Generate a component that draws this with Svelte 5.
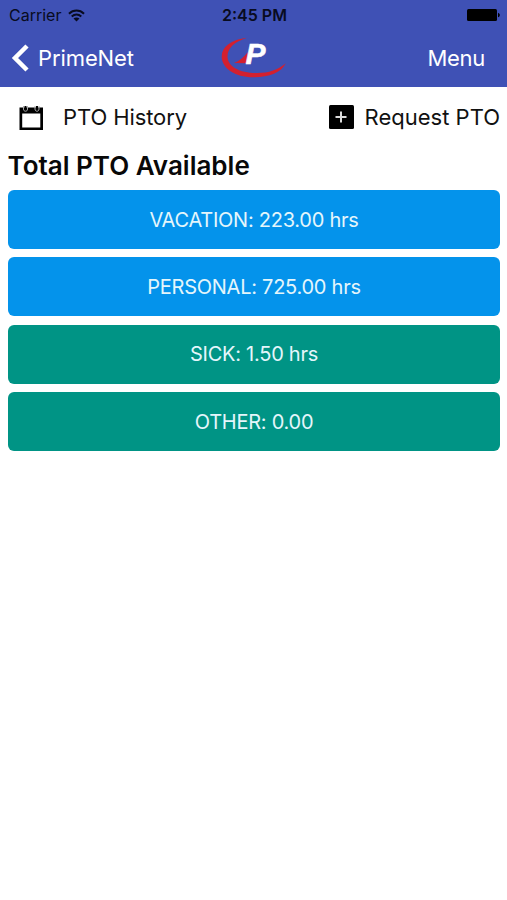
<script>
	// PTO balances, in hours
	let balances = [
		{ label: 'VACATION', value: '223.00 hrs', kind: 'paid' },
		{ label: 'PERSONAL', value: '725.00 hrs', kind: 'paid' },
		{ label: 'SICK', value: '1.50 hrs', kind: 'other' },
		{ label: 'OTHER', value: '0.00', kind: 'other' }
	];
</script>

<div class="screen">
	<header>
		<div class="status">
			<div class="carrier">
				<span>Carrier</span>
				<svg class="wifi" width="17" height="13" viewBox="0 0 16 12">
					<path d="M0.9 4.3C5 0.4 11 0.4 15.1 4.3" />
					<path d="M3.5 6.9C6.2 4.5 9.8 4.5 12.5 6.9" />
					<path class="dot" d="M8 11.7L5.2 8.9C6.8 7.5 9.2 7.5 10.8 8.9Z" />
				</svg>
			</div>
			<span class="time">2:45 PM</span>
			<svg class="battery" width="33" height="12" viewBox="0 0 33 12">
				<rect x="0" y="0" width="30" height="12" rx="1.5" />
				<path d="M31 3.7C33.4 4.5 33.4 7.5 31 8.3Z" />
			</svg>
		</div>
		<nav>
			<button class="back">
				<svg width="18" height="28" viewBox="0 0 18 28">
					<path d="M16 2L4 14L16 26" />
				</svg>
				<span>PrimeNet</span>
			</button>
			<div class="logo">
				<svg width="67" height="43" viewBox="0 0 67 43">
					<path class="red" d="M27 1.8C11 3.500 1.700 11 1.700 20.500C1.700 32 15 41.300 33 41.300C49 41.300 61 37 65.800 27.300C58 34 49 37 37 37C20 37 8 31 7.500 21C7.300 12.500 14 6 27 1.800Z" />
					<path class="red" d="M14 27C19 25 24 21 28 16L27 27.300Z" />
					<text x="25.5" y="27.5">P</text>
				</svg>
			</div>
			<button class="menu">Menu</button>
		</nav>
	</header>

	<main>
		<div class="actions">
			<button class="history">
				<svg width="25" height="25" viewBox="0 0 25 25">
					<path d="M0.500 2.500H24V25H0.500ZM3.200 8.500V22.500H21.300V8.500Z" fill-rule="evenodd" />
					<path class="ring" d="M4.500 1V4C4.500 7 8.500 7 8.500 4V1M16 1V4C16 7 20 7 20 4V1" />
					<path d="M5.500 1H7.500V4.500H5.500ZM17 1H19V4.500H17Z" />
				</svg>
				<span>PTO History</span>
			</button>
			<button class="request">
				<svg width="25" height="24" viewBox="0 0 25 24">
					<rect x="0" y="0" width="25" height="24" rx="1.500" />
					<path class="plus" d="M6.500 12H17.500M12 6.500V17.500" />
				</svg>
				<span>Request PTO</span>
			</button>
		</div>
		<h1>Total PTO Available</h1>
		<div class="balances">
			{#each balances as item}
				<div class="balance {item.kind}"><span>{item.label}: {item.value}</span></div>
			{/each}
		</div>
	</main>
</div>

<style>
	:global(body) {
		background: #fff;
	}

	.screen {
		height: 900px;
		overflow: hidden;
		font-family: Inter, "Liberation Sans", sans-serif;
		color: #111;
	}

	button {
		display: flex;
		align-items: center;
		border: 0;
		padding: 0;
		background: none;
		font: inherit;
		color: inherit;
		white-space: nowrap;
	}

	svg {
		display: block;
		flex: none;
		overflow: visible;
	}

	header {
		height: 87px;
		background: #3f51b5;
	}

	.status {
		display: grid;
		grid-template-columns: 1fr auto 1fr;
		align-items: center;
		height: 30px;
		padding: 0 7px 0 9px;
		font-size: 16px;
		color: #080b20;
	}

	.carrier {
		display: flex;
		align-items: center;
		gap: 7px;
	}

	.wifi path {
		fill: none;
		stroke: #080b20;
		stroke-width: 1.900;
	}

	.wifi .dot {
		fill: #080b20;
		stroke: none;
	}

	.time {
		font-weight: 600;
	}

	.battery {
		justify-self: end;
		fill: #000;
	}

	nav {
		display: grid;
		grid-template-columns: 1fr auto 1fr;
		align-items: center;
		height: 55px;
		padding: 0 11px;
		font-size: 22px;
		color: #fff;
	}

	.back {
		gap: 9px;
		letter-spacing: -0.1px;
	}

	.back path {
		fill: none;
		stroke: #fff;
		stroke-width: 4.500;
	}

	.red {
		fill: #d3202f;
	}

	.logo text {
		font: italic 700 30px "Liberation Sans", sans-serif;
		fill: #fff;
		stroke: #fff;
		stroke-width: 0.5;
	}

	.menu {
		justify-self: end;
		margin-right: 11px;
		letter-spacing: -0.3px;
	}

	.actions {
		display: flex;
		justify-content: space-between;
		height: 60px;
		padding: 0 7px 0 19px;
		font-size: 22px;
	}

	.history {
		gap: 19px;
		letter-spacing: -0.1px;
	}

	.request {
		gap: 11px;
	}

	.ring {
		fill: none;
		stroke: #aaa;
		stroke-width: 1;
	}

	.plus {
		fill: none;
		stroke: #ddd;
		stroke-width: 2;
	}

	h1 {
		margin: 0;
		padding-left: 7.500px;
		font-size: 26px;
		font-weight: 600;
		line-height: 37px;
		color: #080808;
	}

	.balances {
		display: grid;
		gap: 8.400px;
		padding: 6px 7px 0 8px;
	}

	.balance {
		display: flex;
		align-items: center;
		justify-content: center;
		height: 59px;
		border-radius: 6px;
		font-size: 20px;
		letter-spacing: -0.25px;
		color: #e4f6fb;
	}

	.paid {
		background: #0493eb;
	}

	.other {
		background: #009485;
	}
</style>
